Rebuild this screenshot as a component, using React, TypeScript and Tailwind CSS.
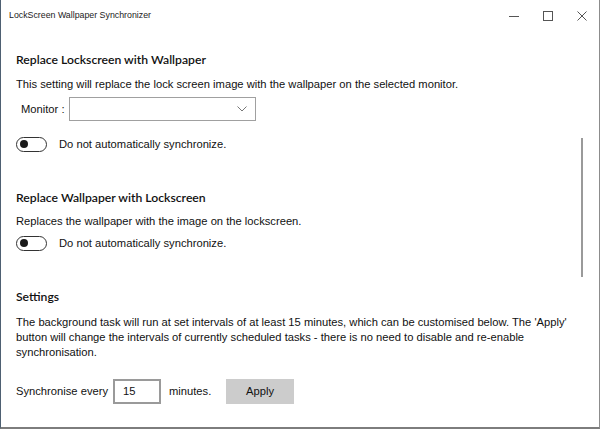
import React from "react";

const font = { fontFamily: '"Segoe UI", "Liberation Sans", Arial, sans-serif' };
const headFont = { fontFamily: 'Lato, "Liberation Sans", sans-serif' };

function Toggle({ label }: { label: string }) {
  return (
    <div className="flex h-[16px] items-center">
      <div className="flex h-[15px] w-[31px] items-center rounded-full border-[1.5px] border-[#333333] pl-[2.5px]">
        <div className="h-[8px] w-[8px] rounded-full bg-[#1a1a1a]" />
      </div>
      <span className="ml-[12px] text-[11.2px] text-[#111]">{label}</span>
    </div>
  );
}

function TitleBar() {
  return (
    <div className="flex h-[31px] items-center justify-between pl-[8px]">
      <span className="text-[8.8px] text-[#222]">LockScreen Wallpaper Synchronizer</span>
      <div className="flex h-full items-center">
        <div className="flex h-full w-[34px] items-center justify-center">
          <svg width="10" height="10" viewBox="0 0 10 10">
            <line x1="0" y1="5.5" x2="10" y2="5.5" stroke="#555" strokeWidth="1" />
          </svg>
        </div>
        <div className="flex h-full w-[34px] items-center justify-center">
          <svg width="10" height="10" viewBox="0 0 10 10">
            <rect x="0.5" y="0.5" width="9" height="9" fill="none" stroke="#555" strokeWidth="1" />
          </svg>
        </div>
        <div className="flex h-full w-[34px] items-center justify-center">
          <svg width="10" height="10" viewBox="0 0 10 10">
            <path d="M0.5 0.5 L9.5 9.5 M9.5 0.5 L0.5 9.5" stroke="#555" strokeWidth="1" />
          </svg>
        </div>
      </div>
    </div>
  );
}

export default function App() {
  return (
    <div
      className="relative h-[429px] w-[600px] overflow-hidden border-b-2 border-l border-r border-b-[#7d7d7d] border-l-[#4e6072] border-r-[#8c8c8c] bg-white text-[#111]"
      style={font}
    >
      <TitleBar />
      <div className="px-[15px] pt-[20px]">
        <h2 className="text-[12.2px] font-semibold leading-[18px]" style={headFont}>
          Replace Lockscreen with Wallpaper
        </h2>
        <p className="mt-[6px] text-[11.2px] leading-[18px]">
          This setting will replace the lock screen image with the wallpaper on the selected monitor.
        </p>
        <div className="mt-[4px] flex h-[24px] items-center pl-[5px]">
          <span className="w-[48px] text-[11.2px]">Monitor :</span>
          <div className="flex h-[24px] w-[187px] items-center justify-end border border-[#a0a0a0] pr-[8px]">
            <svg width="10" height="6" viewBox="0 0 10 6">
              <path d="M0.5 0.5 L5 5 L9.5 0.5" fill="none" stroke="#777" strokeWidth="1" />
            </svg>
          </div>
        </div>
        <div className="mt-[15px]">
          <Toggle label="Do not automatically synchronize." />
        </div>

        <h2 className="mt-[37px] text-[12.2px] font-semibold leading-[18px]" style={headFont}>
          Replace Wallpaper with Lockscreen
        </h2>
        <p className="mt-[5px] text-[11.2px] leading-[18px]">Replaces the wallpaper with the image on the lockscreen.</p>
        <div className="mt-[5px]">
          <Toggle label="Do not automatically synchronize." />
        </div>

        <h2 className="mt-[37px] text-[12.2px] font-semibold leading-[18px]" style={headFont}>
          Settings
        </h2>
        <p className="mt-[9px] text-[11.2px] leading-[15px]">
          The background task will run at set intervals of at least 15 minutes, which can be customised below. The
          'Apply' button will change the intervals of currently scheduled tasks - there is no need to disable and
          re-enable synchronisation.
        </p>
        <div className="mt-[18px] flex h-[26px] items-center">
          <span className="w-[97px] text-[11.2px]">Synchronise every</span>
          <div className="flex h-[25px] w-[48px] items-center border-2 border-[#9a9a9a] pl-[8px] text-[11.2px]">
            15
          </div>
          <span className="ml-[8px] w-[57px] text-[11.2px]">minutes.</span>
          <div className="flex h-[25px] w-[68px] items-center justify-center bg-[#cccccc] text-[11.2px]">
            Apply
          </div>
        </div>
      </div>
      <div className="absolute left-[580px] top-[138px] h-[139px] w-[2px] bg-[#9a9a9a]" />
    </div>
  );
}
